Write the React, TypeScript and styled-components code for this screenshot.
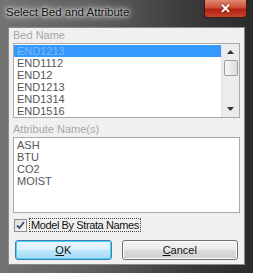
import React, { FC, useState } from 'react';
import styled, { createGlobalStyle } from 'styled-components';

const GlobalStyle = createGlobalStyle`
  html, body {
    margin: 0;
    padding: 0;
    background: #2b2b2b;
  }
`;

export const Window = styled.div`
  width: 253px;
  height: 273px;
  box-sizing: border-box;
  display: flex;
  flex-direction: column;
  font-family: 'Liberation Sans', Arial, sans-serif;
  background: linear-gradient(90deg, #727272 0%, #5c5c5c 40%, #3a3a3a 75%, #2a2a2a 100%);
  overflow: hidden;
`;

export const TitleBar = styled.div`
  height: 27px;
  flex: none;
  display: flex;
  align-items: flex-start;
  justify-content: space-between;
  padding-left: 6px;
`;

export const Title = styled.span`
  margin-top: 6px;
  font-size: 11.5px;
  color: #111;
  text-shadow: 0 0 6px #e8e8e8, 0 0 10px #d0d0d0, 0 0 3px #fff;
`;

export const CloseButton = styled.div`
  width: 43px;
  height: 18px;
  margin-right: 6px;
  box-sizing: border-box;
  border: 1px solid #3c1a14;
  border-top: none;
  border-radius: 0 0 4px 4px;
  background: linear-gradient(180deg, #e08a74 0%, #cf4e34 45%, #b3220f 55%, #c8442c 100%);
  display: flex;
  align-items: center;
  justify-content: center;
  color: #fff;
  font-weight: bold;
  font-size: 13px;
  text-shadow: 0 0 2px #5a1006;
`;

export const Client = styled.div`
  flex: 1;
  margin: 0 8px 8px 8px;
  background: #f0f0f0;
  border: 1px solid #8a8a8a;
  box-sizing: border-box;
  padding: 1px 4px 0 4px;
  display: flex;
  flex-direction: column;
`;

export const GroupLabel = styled.div`
  font-size: 11px;
  color: #a8a8a8;
  height: 13px;
  line-height: 13px;
  margin-bottom: 1px;
`;

export const ListBox = styled.div<{ $height: number }>`
  height: ${(p) => p.$height}px;
  flex: none;
  border: 1px solid #aaa;
  background: #fff;
  box-sizing: border-box;
  display: flex;
  overflow: hidden;
`;

export const Rows = styled.div`
  flex: 1;
  padding-top: 1px;
`;

export const Row = styled.div<{ $selected?: boolean }>`
  height: 12px;
  line-height: 12px;
  font-size: 11px;
  padding-left: 3px;
  color: ${(p) => (p.$selected ? '#7fb8f8' : '#555')};
  background: ${(p) => (p.$selected ? '#3399ff' : 'transparent')};
`;

export const ScrollBar = styled.div`
  width: 17px;
  flex: none;
  background: #ececec;
  border-left: 1px solid #e2e2e2;
  display: flex;
  flex-direction: column;
  align-items: center;
`;

export const Arrow = styled.div`
  height: 16px;
  width: 100%;
  display: flex;
  align-items: center;
  justify-content: center;
`;

export const Thumb = styled.div`
  width: 14px;
  height: 16px;
  box-sizing: border-box;
  border: 1px solid #9c9c9c;
  border-radius: 2px;
  background: linear-gradient(90deg, #f6f6f6, #dcdcdc);
`;

export const Track = styled.div`
  flex: 1;
`;

export const Spacer = styled.div<{ $h: number }>`
  height: ${(p) => p.$h}px;
  flex: none;
`;

export const CheckRow = styled.label`
  display: flex;
  align-items: center;
  gap: 2px;
  height: 14px;
  padding-left: 1px;
`;

export const CheckBox = styled.div`
  width: 13px;
  height: 13px;
  box-sizing: border-box;
  border: 1px solid #8f8f8f;
  background: linear-gradient(135deg, #dcdcdc, #fbfbfb);
  display: flex;
  align-items: center;
  justify-content: center;
`;

export const CheckText = styled.span`
  font-size: 11px;
  letter-spacing: -0.4px;
  color: #111;
  border: 1px dotted #444;
  padding: 0 1px;
  line-height: 12px;
`;

export const ButtonRow = styled.div`
  display: flex;
  gap: 10px;
  padding: 0 2px 0 2px;
`;

export const Button = styled.div<{ $default?: boolean; $w: number }>`
  width: ${(p) => p.$w}px;
  height: 20px;
  box-sizing: border-box;
  border: 1px solid ${(p) => (p.$default ? '#3c7fb1' : '#707070')};
  border-radius: 3px;
  background: ${(p) =>
    p.$default
      ? 'linear-gradient(180deg, #eaf6fd 0%, #d9f0fc 50%, #bee6fd 51%, #a7d9f5 100%)'
      : 'linear-gradient(180deg, #f2f2f2 0%, #ebebeb 50%, #dddddd 51%, #cfcfcf 100%)'};
  box-shadow: ${(p) => (p.$default ? 'inset 0 0 0 1px #48d3f5' : 'inset 0 0 0 1px #fcfcfc')};
  font-size: 11px;
  color: #111;
  display: flex;
  align-items: center;
  justify-content: center;
  u {
    text-decoration: underline;
  }
`;

const beds = ['END1213', 'END1112', 'END12', 'END1213', 'END1314', 'END1516'];
const attributes = ['ASH', 'BTU', 'CO2', 'MOIST'];

const App: FC = () => {
  const [selected] = useState(0);
  return (
    <>
      <GlobalStyle />
      <Window>
        <TitleBar>
          <Title>Select Bed and Attribute</Title>
          <CloseButton>✕</CloseButton>
        </TitleBar>
        <Client>
          <GroupLabel>Bed Name</GroupLabel>
          <ListBox $height={75}>
            <Rows>
              {beds.map((b, i) => (
                <Row key={`bed-${i}`} $selected={i === selected}>
                  {b}
                </Row>
              ))}
            </Rows>
            <ScrollBar>
              <Arrow>
                <svg width="7" height="4" viewBox="0 0 7 4">
                  <path d="M0 4 L3.5 0 L7 4 Z" fill="#333" />
                </svg>
              </Arrow>
              <Thumb />
              <Track />
              <Arrow>
                <svg width="7" height="4" viewBox="0 0 7 4">
                  <path d="M0 0 L3.5 4 L7 0 Z" fill="#333" />
                </svg>
              </Arrow>
            </ScrollBar>
          </ListBox>
          <Spacer $h={5} />
          <GroupLabel>Attribute Name(s)</GroupLabel>
          <ListBox $height={76}>
            <Rows>
              {attributes.map((a) => (
                <Row key={a}>{a}</Row>
              ))}
            </Rows>
          </ListBox>
          <Spacer $h={5} />
          <CheckRow>
            <CheckBox>
              <svg width="9" height="9" viewBox="0 0 9 9">
                <path d="M1 4.5 L3.5 7 L8 1" stroke="#3a4f72" strokeWidth="1.8" fill="none" />
              </svg>
            </CheckBox>
            <CheckText>Model By Strata Names</CheckText>
          </CheckRow>
          <Spacer $h={8} />
          <ButtonRow>
            <Button $default $w={97}>
              <span>
                <u>O</u>K
              </span>
            </Button>
            <Button $w={117}>
              <span>
                <u>C</u>ancel
              </span>
            </Button>
          </ButtonRow>
        </Client>
      </Window>
    </>
  );
};

export default App;
